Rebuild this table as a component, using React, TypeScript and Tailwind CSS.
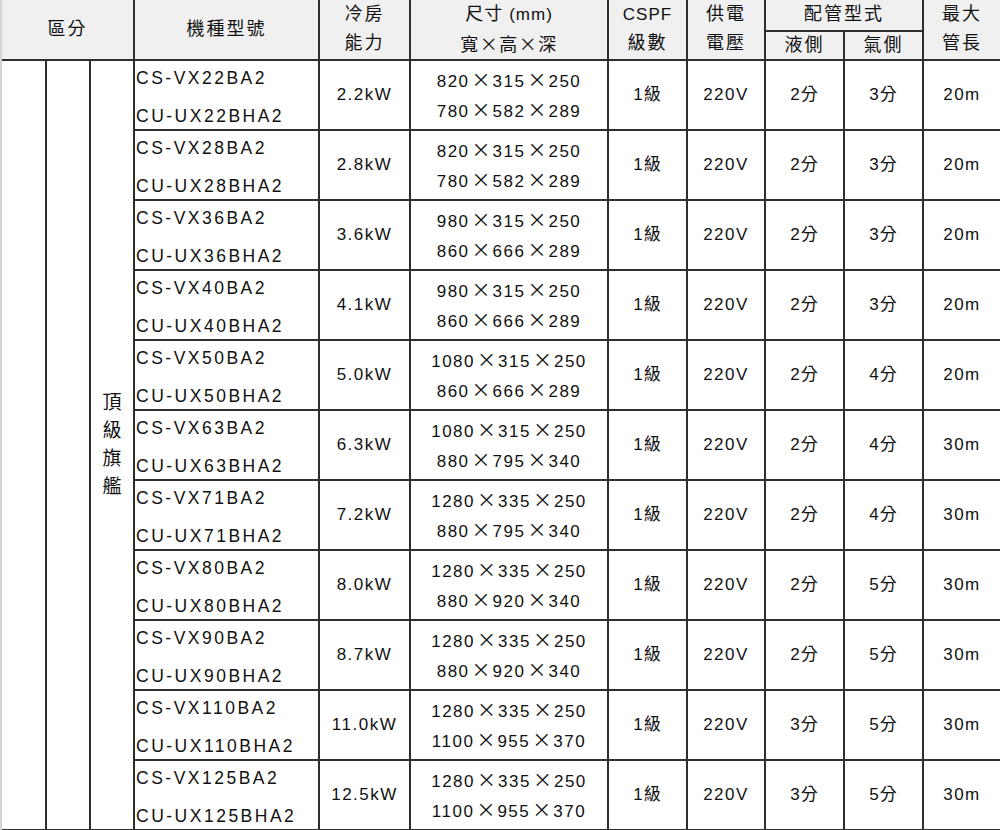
const ROWS = [
  ['CS-VX22BA2', 'CU-UX22BHA2', '2.2kW', '820×315×250', '780×582×289', '2分', '3分', '20m'],
  ['CS-VX28BA2', 'CU-UX28BHA2', '2.8kW', '820×315×250', '780×582×289', '2分', '3分', '20m'],
  ['CS-VX36BA2', 'CU-UX36BHA2', '3.6kW', '980×315×250', '860×666×289', '2分', '3分', '20m'],
  ['CS-VX40BA2', 'CU-UX40BHA2', '4.1kW', '980×315×250', '860×666×289', '2分', '3分', '20m'],
  ['CS-VX50BA2', 'CU-UX50BHA2', '5.0kW', '1080×315×250', '860×666×289', '2分', '4分', '20m'],
  ['CS-VX63BA2', 'CU-UX63BHA2', '6.3kW', '1080×315×250', '880×795×340', '2分', '4分', '30m'],
  ['CS-VX71BA2', 'CU-UX71BHA2', '7.2kW', '1280×335×250', '880×795×340', '2分', '4分', '30m'],
  ['CS-VX80BA2', 'CU-UX80BHA2', '8.0kW', '1280×335×250', '880×920×340', '2分', '5分', '30m'],
  ['CS-VX90BA2', 'CU-UX90BHA2', '8.7kW', '1280×335×250', '880×920×340', '2分', '5分', '30m'],
  ['CS-VX110BA2', 'CU-UX110BHA2', '11.0kW', '1280×335×250', '1100×955×370', '3分', '5分', '30m'],
  ['CS-VX125BA2', 'CU-UX125BHA2', '12.5kW', '1280×335×250', '1100×955×370', '3分', '5分', '30m'],
];

// every cell draws its own right and bottom line
const line = 'border-r-2 border-b-2 border-[#2e2e2e]';
const cell = `${line} flex items-center justify-center`;
const head = `${cell} bg-[#f0f0f0] text-[18px] tracking-[2px]`;
const head2 = `${line} bg-[#f0f0f0] row-span-2 flex flex-col items-center text-[18px] tracking-[2px] leading-[29px] pb-[3px]`;
const cjk = "font-['Noto_Sans_CJK_TC',sans-serif]";

// dimensions: wide multiplication sign like the original page
const Dim = ({ text }: { text: string }) => {
  const parts = text.split('×');
  return (
    <div className="tracking-[1.5px]">
      {parts.map((p, i) => (
        <span key={i}>
          {p}
          {i < parts.length - 1 && <span className={`mx-[2px] ${cjk} text-[19px] tracking-[0px]`}>×</span>}
        </span>
      ))}
    </div>
  );
};

export default function App() {
  return (
    <div className="h-[830px] w-[1000px] overflow-hidden bg-white">
      <div className="grid w-[1000px] grid-cols-[45px_44px_44px_185px_91px_198px_79px_78px_79px_79px_78px] grid-rows-[32px_29px_repeat(11,70px)] border-l-2 border-[#d4d4d4] font-['Liberation_Sans','Noto_Sans_CJK_TC',sans-serif] text-[17px] text-[#111]">
        {/* header */}
        <div className={`${head} col-span-3 row-span-2`}>區分</div>
        <div className={`${head} row-span-2`}>機種型號</div>
        <div className={head2}>
          <span>冷房</span>
          <span>能力</span>
        </div>
        <div className={head2}>
          <span className="tracking-[1px]">
            尺寸 <span className="text-[17px]">(mm)</span>
          </span>
          <span className={`${cjk} tracking-[1.5px]`}>寬×高×深</span>
        </div>
        <div className={head2}>
          <span className="text-[17px] tracking-[1px]">CSPF</span>
          <span>級數</span>
        </div>
        <div className={head2}>
          <span>供電</span>
          <span>電壓</span>
        </div>
        <div className={`${head} col-span-2 pb-[2px]`}>配管型式</div>
        <div className={head2}>
          <span>最大</span>
          <span>管長</span>
        </div>
        <div className={head}>液側</div>
        <div className={head}>氣側</div>

        {/* left grouping columns */}
        <div className={`${line} row-span-11`} />
        <div className={`${line} row-span-11`} />
        <div className={`${cell} row-span-11 flex-col text-[19px] leading-[28px]`}>
          <span>頂</span>
          <span>級</span>
          <span>旗</span>
          <span>艦</span>
        </div>

        {ROWS.map((r) => (
          <div key={r[0]} className="contents">
            <div className={`${line} flex flex-col justify-between pt-[7px] pb-[3px] pl-[1px] text-[17.5px] leading-[20px] tracking-[2.5px]`}>
              <span>{r[0]}</span>
              <span>{r[1]}</span>
            </div>
            <div className={`${cell} tracking-[1.5px]`}>{r[2]}</div>
            <div className={`${cell} flex-col leading-[27px]`}>
              <Dim text={r[3]} />
              <Dim text={r[4]} />
            </div>
            <div className={`${cell} tracking-[1px]`}>1級</div>
            <div className={`${cell} tracking-[1.5px]`}>220V</div>
            <div className={`${cell} tracking-[1px]`}>{r[5]}</div>
            <div className={`${cell} tracking-[1px]`}>{r[6]}</div>
            <div className={`${cell} tracking-[1.5px]`}>{r[7]}</div>
          </div>
        ))}
      </div>
    </div>
  );
}
